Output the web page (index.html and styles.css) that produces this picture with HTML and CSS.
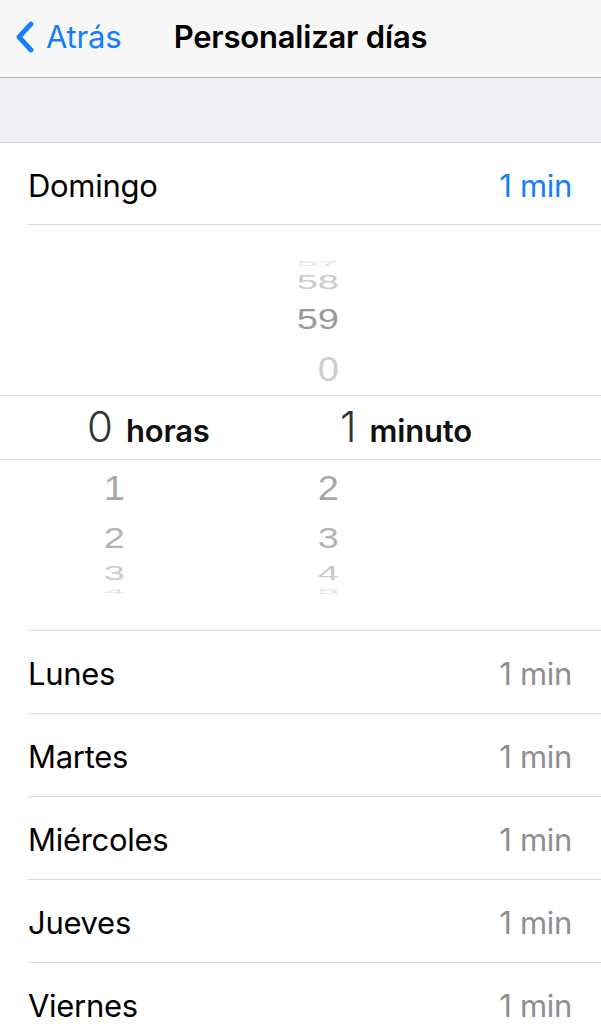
FILE: index.html
```html
<!DOCTYPE html>
<html lang="es">
<head>
<meta charset="utf-8">
<title>Personalizar días</title>
<link rel="stylesheet" href="styles.css">
</head>
<body>
<header class="nav">
  <div class="back">
    <svg class="chev" width="22" height="32" viewBox="0 0 22 32" aria-hidden="true">
      <path d="M17 3 L5 16 L17 29" fill="none" stroke="#157efb" stroke-width="4.8" stroke-linecap="round" stroke-linejoin="round"/>
    </svg>
    <span class="back-label">Atrás</span>
  </div>
  <h1 class="title">Personalizar días</h1>
  <div></div>
</header>
<div class="band"></div>
<main class="list">
  <div class="row"><span class="day">Domingo</span><span class="val active">1 min</span></div>
  <section class="picker">
    <div class="wheel-top">
      <div class="wline h10"><span></span><span class="num d4">57</span></div>
      <div class="wline h27"><span></span><span class="num d3">58</span></div>
      <div class="wline h48"><span></span><span class="num d2 dark">59</span></div>
      <div class="wline h52"><span></span><span class="num d1 faint">0</span></div>
    </div>
    <div class="wheel-sel">
      <div class="sel-group sel-h"><span class="sel-num">0</span><span class="sel-label">horas</span></div>
      <div class="sel-group"><span class="sel-num">1</span><span class="sel-label">minuto</span></div>
    </div>
    <div class="wheel-bottom">
      <div class="wline h56"><span class="num d1">1</span><span class="num d1">2</span></div>
      <div class="wline h44"><span class="num d2">2</span><span class="num d2">3</span></div>
      <div class="wline h26"><span class="num d3">3</span><span class="num d3">4</span></div>
      <div class="wline h10"><span class="num d4">4</span><span class="num d4">5</span></div>
    </div>
  </section>
  <div class="row"><span class="day">Lunes</span><span class="val">1 min</span></div>
  <div class="row"><span class="day">Martes</span><span class="val">1 min</span></div>
  <div class="row"><span class="day">Miércoles</span><span class="val">1 min</span></div>
  <div class="row"><span class="day">Jueves</span><span class="val">1 min</span></div>
  <div class="row"><span class="day">Viernes</span><span class="val">1 min</span></div>
</main>
</body>
</html>
```

FILE: styles.css
```css
* { box-sizing: border-box; }
html, body { margin: 0; padding: 0; background: #ffffff; }
body {
  font-family: Inter, "Noto Sans", sans-serif;
  color: #000;
  overflow: hidden;
  height: 1024px;
}

.nav {
  height: 78px;
  background: #f7f7f8;
  border-bottom: 1px solid #b4b4b6;
  display: grid;
  grid-template-columns: 1fr auto 1fr;
  align-items: center;
}
.back {
  display: flex;
  align-items: center;
  padding-left: 14px;
  color: #157efb;
  padding-bottom: 4px;
}
.chev { display: block; margin-right: 10px; }
.back-label { font-size: 31px; letter-spacing: -0.2px; }
.title {
  margin: 0;
  font-size: 31px;
  font-weight: 600;
  letter-spacing: -0.2px;
  padding-bottom: 4px;
}

.band {
  height: 65px;
  background: #efeff4;
  border-bottom: 1px solid #d6d6da;
}

.row {
  height: 83px;
  margin-left: 28px;
  padding-right: 29px;
  border-bottom: 1px solid #dcdce0;
  display: flex;
  align-items: center;
  justify-content: space-between;
  font-size: 31px;
  letter-spacing: -0.3px;
  padding-top: 3px;
}
.row:first-child { height: 82px; }
.val { color: #8e8e93; }
.val.active { color: #157efb; }

.picker {
  display: flex;
  flex-direction: column;
  height: 406px;
}
.picker::after {
  content: "";
  display: block;
  margin-left: 28px;
  border-bottom: 1px solid #dcdce0;
}
.wheel-top {
  height: 170px;
  display: flex;
  flex-direction: column;
  justify-content: flex-end;
}
.wheel-bottom {
  height: 170px;
  display: flex;
  flex-direction: column;
}
.wline {
  display: grid;
  grid-template-columns: 125px 214px;
  align-items: center;
}
.h10 { height: 10px; }
.h26 { height: 26px; }
.h27 { height: 27px; }
.h44 { height: 44px; }
.h48 { height: 48px; }
.h52 { height: 52px; }
.h56 { height: 56px; }

.num {
  font-family: "Liberation Sans", Arial, sans-serif;
  font-size: 38px;
  line-height: 38px;
  height: 38px;
  margin: -14px 0;
  text-align: right;
  display: block;
}
.d1 { color: #a8a8a8; transform: scaleY(0.92); }
.d2 { color: #b5b5b5; transform: scaleY(0.8); }
.d3 { color: #cbcbcb; transform: scaleY(0.55); }
.d4 { color: #e3e3e3; transform: scaleY(0.2); }
.dark { color: #9a9a9a; }
.faint { color: #cdcdcd; }

.wheel-sel {
  height: 65px;
  border-top: 1px solid #e0e0e2;
  border-bottom: 1px solid #e0e0e2;
  display: flex;
  align-items: center;
  padding-left: 87px;
}
.sel-group {
  display: flex;
  align-items: baseline;
  gap: 13px;
}
.sel-h { width: 253px; }
.sel-num {
  font-size: 42px;
  font-weight: 300;
  color: #333;
  line-height: 1;
}
.sel-label {
  font-size: 31px;
  font-weight: 600;
  color: #111;
  letter-spacing: -0.2px;
}
```
